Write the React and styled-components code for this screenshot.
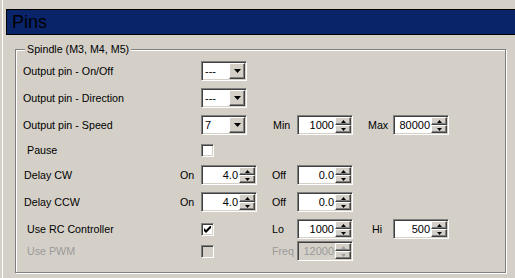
import React from 'react';
import styled, { createGlobalStyle } from 'styled-components';

const Global = createGlobalStyle`
  html, body { margin: 0; padding: 0; background: #d4d0c8; }
  body {
    font-family: "Liberation Sans", Arial, sans-serif;
    font-size: 10.7px;
    color: #000;
    overflow: hidden;
  }
  #root { width: 515px; height: 278px; }
`;

const Page = styled.div`
  width: 515px;
  height: 278px;
  box-sizing: border-box;
  background: #d4d0c8;
  padding-left: 2px;
  overflow: hidden;
`;

const Frame = styled.div`
  height: 100%;
  box-sizing: border-box;
  border-left: 1px solid #ffffff;
  padding: 9px 0 0 3px;
  display: flex;
  flex-direction: column;
`;

const Header = styled.div`
  height: 24px;
  background: #0a246a;
  border-top: 1px solid #000;
  border-bottom: 1px solid #000;
  border-left: 1px solid #000;
  padding-left: 5px;
  font-size: 18px;
  line-height: 24px;
  color: #000;
  margin-right: -20px;
`;

const GroupBox = styled.div`
  position: relative;
  margin: 14px 0 0 9px;
  width: 491px;
  height: 224px;
  box-sizing: border-box;
  border: 1px solid #808080;
  box-shadow: inset 1px 1px 0 #ffffff, 1px 1px 0 #ffffff;
  padding: 11px 0 0 7px;
`;

const Legend = styled.div`
  position: absolute;
  top: -7px;
  left: 9px;
  padding: 0 2px;
  line-height: 13px;
  background: #d4d0c8;
`;

const Row = styled.div`
  display: grid;
  grid-template-columns: 157px 21px 71px 25px 71px 25px 56px;
  height: 20px;
  align-items: center;
  margin-top: ${p => p.$mt || 0}px;
`;

const Label = styled.span`
  padding-left: ${p => p.$indent || 0}px;
  white-space: nowrap;
  color: ${p => (p.$disabled ? '#9a9a9a' : '#000')};
`;

const Sunken = styled.div`
  box-sizing: border-box;
  height: 20px;
  border-top: 1px solid #808080;
  border-left: 1px solid #808080;
  border-bottom: 1px solid #ffffff;
  border-right: 1px solid #ffffff;
  box-shadow: inset 1px 1px 0 #404040, inset -1px -1px 0 #d4d0c8;
  padding: 1px;
  display: flex;
  background: ${p => (p.$disabled ? '#d4d0c8' : '#ffffff')};
`;

const ComboBox = styled(Sunken)`
  width: 46px;
`;

const SpinBox = styled(Sunken)`
  width: 56px;
`;

const Field = styled.div`
  flex: 1;
  line-height: 16px;
  padding: 0 1px 0 2px;
  text-align: ${p => (p.$right ? 'right' : 'left')};
  color: ${p => (p.$disabled ? '#9a9a9a' : '#000')};
  overflow: hidden;
  font-size: 11px;
`;

const RaisedButton = styled.div`
  box-sizing: border-box;
  width: 16px;
  background: #d4d0c8;
  border-top: 1px solid #ffffff;
  border-left: 1px solid #ffffff;
  border-right: 1px solid #404040;
  border-bottom: 1px solid #404040;
  box-shadow: inset -1px -1px 0 #808080;
  display: flex;
  align-items: center;
  justify-content: center;
`;

const DropButton = styled(RaisedButton)`
  height: 16px;
`;

const SpinButtons = styled.div`
  display: flex;
  flex-direction: column;
  width: 16px;
`;

const SpinButton = styled(RaisedButton)`
  height: 8px;
`;

const Check = styled.div`
  box-sizing: border-box;
  width: 13px;
  height: 13px;
  border-top: 1px solid #808080;
  border-left: 1px solid #808080;
  border-bottom: 1px solid #ffffff;
  border-right: 1px solid #ffffff;
  box-shadow: inset 1px 1px 0 #404040, inset -1px -1px 0 #d4d0c8;
  background: ${p => (p.$disabled ? '#d4d0c8' : '#ffffff')};
  display: flex;
  align-items: center;
  justify-content: center;
`;

const Arrow = ({ up, disabled, big }) => {
  const c = disabled ? '#a0a0a0' : '#000';
  if (big) {
    return (
      <svg width="7" height="4" viewBox="0 0 7 4" style={{ display: 'block' }}>
        <path d="M0 0h7L3.5 4z" fill={c} />
      </svg>
    );
  }
  return (
    <svg width="5" height="3" viewBox="0 0 5 3" style={{ display: 'block' }}>
      <path d={up ? 'M2.5 0L5 3H0z' : 'M0 0h5L2.5 3z'} fill={c} />
    </svg>
  );
};

const Combo = ({ value }) => (
  <ComboBox>
    <Field>{value}</Field>
    <DropButton>
      <Arrow big />
    </DropButton>
  </ComboBox>
);

const Spin = ({ value, disabled }) => (
  <SpinBox $disabled={disabled}>
    <Field $right $disabled={disabled}>{value}</Field>
    <SpinButtons>
      <SpinButton><Arrow up disabled={disabled} /></SpinButton>
      <SpinButton><Arrow disabled={disabled} /></SpinButton>
    </SpinButtons>
  </SpinBox>
);

const CheckBox = ({ checked, disabled }) => (
  <Check $disabled={disabled}>
    {checked && (
      <svg width="7" height="7" viewBox="0 0 7 7" style={{ display: 'block' }}>
        <path d="M0 2v3l2 2 5-5V-1L2 4z" fill="#000" />
      </svg>
    )}
  </Check>
);

const Empty = styled.span``;

export default function App() {
  return (
    <Page>
      <Global />
      <Frame>
        <Header>Pins</Header>
        <GroupBox>
          <Legend>Spindle (M3, M4, M5)</Legend>

          <Row>
            <Label>Output pin - On/Off</Label>
            <Empty />
            <Combo value="---" />
          </Row>

          <Row $mt={7}>
            <Label>Output pin - Direction</Label>
            <Empty />
            <Combo value="---" />
          </Row>

          <Row $mt={7}>
            <Label>Output pin - Speed</Label>
            <Empty />
            <Combo value="7" />
            <Label $indent={1}>Min</Label>
            <Spin value="1000" />
            <Label>Max</Label>
            <Spin value="80000" />
          </Row>

          <Row $mt={5}>
            <Label $indent={4}>Pause</Label>
            <Empty />
            <CheckBox />
          </Row>

          <Row $mt={5}>
            <Label $indent={1}>Delay CW</Label>
            <Label>On</Label>
            <Spin value="4.0" />
            <Label>Off</Label>
            <Spin value="0.0" />
          </Row>

          <Row $mt={7}>
            <Label $indent={1}>Delay CCW</Label>
            <Label>On</Label>
            <Spin value="4.0" />
            <Label>Off</Label>
            <Spin value="0.0" />
          </Row>

          <Row $mt={7}>
            <Label $indent={4}>Use RC Controller</Label>
            <Empty />
            <CheckBox checked />
            <Label>Lo</Label>
            <Spin value="1000" />
            <Label $indent={4}>Hi</Label>
            <Spin value="500" />
          </Row>

          <Row $mt={2}>
            <Label $indent={4} $disabled>Use PWM</Label>
            <Empty />
            <CheckBox disabled />
            <Label $disabled>Freq</Label>
            <Spin value="12000" disabled />
          </Row>
        </GroupBox>
      </Frame>
    </Page>
  );
}
